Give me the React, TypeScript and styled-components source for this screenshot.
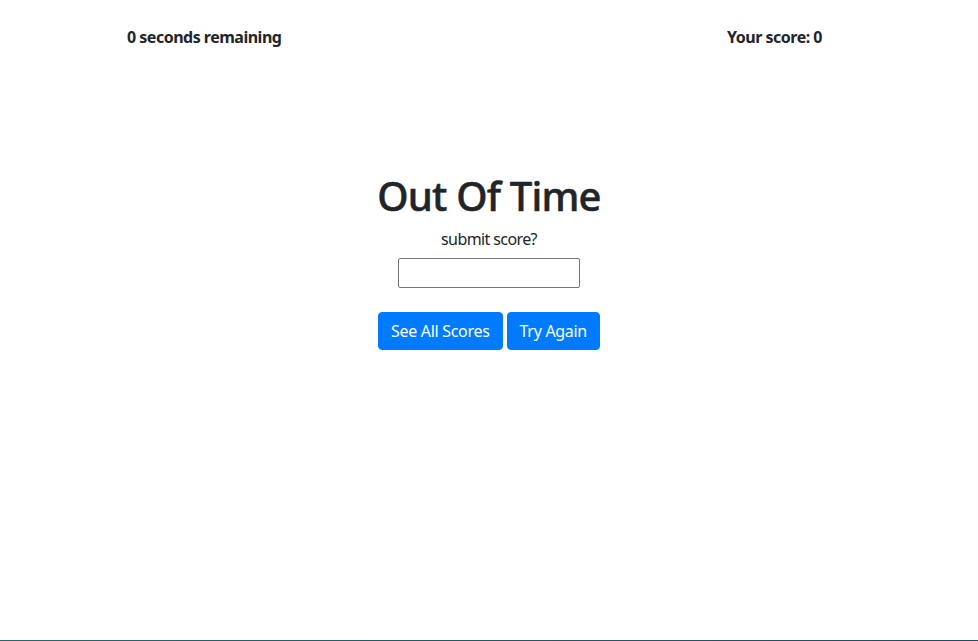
import React from "react";
import styled, { createGlobalStyle } from "styled-components";

const GlobalStyle = createGlobalStyle`
  body {
    margin: 0;
    font-family: "Noto Sans", "Open Sans", sans-serif;
    color: #212529;
    background: #fff;
  }
`;

const Page = styled.div`
  min-height: 640px;
  display: flex;
  flex-direction: column;
`;

const TopBar = styled.div`
  display: flex;
  justify-content: space-between;
  padding: 25px 156px 0 127px;
  font-size: 16px;
  font-weight: 700;
  line-height: 24px;
  letter-spacing: -0.5px;
`;

const Content = styled.div`
  display: flex;
  flex-direction: column;
  align-items: center;
  margin-top: 123px;
`;

const Title = styled.h1`
  margin: 0;
  font-size: 40px;
  font-weight: 500;
  line-height: 48px;
  letter-spacing: -0.8px;
  -webkit-text-stroke: 0.5px currentColor;
`;

const Prompt = styled.p`
  margin: 7px 0 7px;
  font-size: 16px;
  line-height: 24px;
  letter-spacing: -0.6px;
`;

const ScoreInput = styled.input`
  box-sizing: border-box;
  width: 182px;
  height: 30px;
  border: 1px solid #767676;
  border-radius: 2px;
  font: inherit;
  padding: 1px 4px;
`;

const ButtonRow = styled.div`
  display: flex;
  gap: 4px;
  margin-top: 24px;
`;

const Button = styled.button`
  font-family: inherit;
  font-size: 16px;
  line-height: 24px;
  letter-spacing: -0.3px;
  padding: 6px 12px;
  color: #fff;
  background: #007bff;
  border: 1px solid #007bff;
  border-radius: 4px;
  cursor: pointer;
`;

const Footer = styled.footer`
  height: 80px;
  background: linear-gradient(90deg, #1c6b72, #1e4a6e);
`;

export default function App() {
  return (
    <>
      <GlobalStyle />
      <Page>
        <TopBar>
          <span>0 seconds remaining</span>
          <span>Your score: 0</span>
        </TopBar>
        <Content>
          <Title>Out Of Time</Title>
          <Prompt>submit score?</Prompt>
          <ScoreInput type="text" />
          <ButtonRow>
            <Button>See All Scores</Button>
            <Button>Try Again</Button>
          </ButtonRow>
        </Content>
      </Page>
      <Footer />
    </>
  );
}
